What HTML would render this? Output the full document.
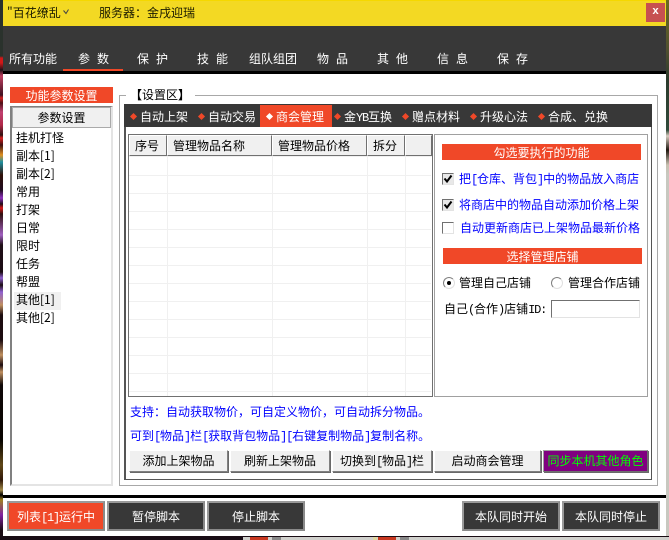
<!DOCTYPE html>
<html lang="zh"><head><meta charset="utf-8"><title>百花缭乱</title>
<style>
html,body{margin:0;padding:0;background:#fff}
#r{position:relative;width:669px;height:540px;overflow:hidden;background:#fff;font:12px/16px "WenQuanYi Zen Hei","Noto Sans CJK SC","Liberation Sans",sans-serif;color:#000}
#r div{position:absolute;box-sizing:border-box}
.t{white-space:nowrap}
.w{color:#fff}.b{color:#00f}
.m{font-family:"Liberation Mono",monospace;font-size:12px;letter-spacing:-1.200px}
.n{letter-spacing:7px}
.o{background:#f04828;color:#fff;text-align:center}
.btn{background:#f0f0f0;border:1px solid;border-color:#fff #808080 #808080 #fff;box-shadow:1px 1px 0 #696969;text-align:center;line-height:20px}
.dk{background:#383838;color:#fff;border:2px solid;border-color:#9a9a9a #8a8a8a #8a8a8a #9a9a9a;text-align:center;line-height:27px}
.tab{color:#fff;top:109px}
.dot{width:5px;height:5px;background:#f04828;transform:rotate(45deg);top:114px}
.hl{left:129px;width:302px;height:1px;background:#f0f0f0}
.vl{top:157px;height:239px;width:1px;background:#f0f0f0}
.th{top:135px;height:21px;background:#f0f0f0;border:1px solid;border-color:#fff #707070 #707070 #fff;line-height:19px;padding-left:5px;white-space:nowrap}
.cb{width:12px;height:12px;left:442px;background:#fff;border:1px solid;border-color:#707070 #e3e3e3 #e3e3e3 #707070}
.cb.on{background:#e8e8e8}
.rd{width:12px;height:12px;border-radius:50%;border:1px solid;border-color:#808080 #e0e0e0 #e0e0e0 #808080;background:#fff}
</style></head><body><div id="r">
<!-- backdrop strips -->
<div style="left:0;top:0;width:3px;height:540px;background:linear-gradient(#2a322c 0,#2a322c 56px,#d01818 58px,#d01818 63px,#201018 70px,#c04060 76px,#401020 95px,#d02020 98px,#501018 103px,#c04070 112px,#b02848 125px,#301010 135px,#d82020 138px,#401010 145px,#e09020 155px,#2090a0 162px,#301008 175px,#200c20 190px,#9030c0 198px,#200c18 204px,#d81818 208px,#301010 214px,#a060c0 235px,#201018 245px,#1c0c14 272px,#9060d0 278px,#1c0c14 285px,#9060d0 292px,#c09060 305px,#1c0c10 315px,#1c0c10 340px,#c09060 355px,#1c0c10 365px,#c09060 372px,#100808 385px,#080400 440px,#604818 465px,#301808 480px,#a08848 490px,#000 495px,#a08020 500px,#8020a0 515px,#1a0c14 530px,#1a0c14 540px)"></div>
<div style="left:666px;top:0;width:3px;height:540px;background:linear-gradient(#6a6a20 0,#505030 50px,#2c3a2c 80px,#304a3a 130px,#d8ccc0 136px,#201810 150px,#c8c0b0 165px,#c8c8c0 175px,#c8c8c0 540px)"></div>
<div style="left:0;top:536px;width:669px;height:4px;background:#180c14"></div>
<div style="left:243px;top:537px;width:426px;height:3px;background:#d0d0cc"></div>
<div style="left:250px;top:537px;width:18px;height:3px;background:#c83820"></div>
<div style="left:272px;top:537px;width:9px;height:3px;background:#888"></div>
<div style="left:373px;top:537px;width:4px;height:3px;background:#e0d8a0"></div>
<div style="left:378px;top:537px;width:18px;height:3px;background:#c83820"></div>
<div style="left:400px;top:537px;width:9px;height:3px;background:#888"></div>
<!-- main -->
<div style="left:3px;top:0;width:663px;height:26px;background:#f3d923;border-top:1px solid #f5d800"></div>
<div style="left:3px;top:26px;width:663px;height:45px;background:#383838"></div>
<div style="left:3px;top:71px;width:663px;height:3px;background:#000"></div>
<div style="left:3px;top:495px;width:663px;height:3px;background:#000"></div>
<div class="t" style="left:7px;top:5px;color:#1a1a00">"百花缭乱</div>
<svg style="position:absolute;left:63px;top:9px" width="6" height="6"><path d="M0.500 1.500L3 4.500L5.500 0.500" fill="none" stroke="#444" stroke-width="1"/></svg>
<div class="t" style="left:99px;top:5px;color:#1a1a00">服务器：金戌迎瑞</div>
<div class="w" style="left:646px;top:3px;width:19px;height:19px;background:#c75050;text-align:center;font:bold 11px/19px 'Liberation Mono',monospace">x</div>
<!-- nav -->
<div class="t w" style="left:9px;top:51px">所有功能</div>
<div class="t w n" style="left:78px;top:51px">参数</div>
<div class="t w n" style="left:137px;top:51px">保护</div>
<div class="t w n" style="left:197px;top:51px">技能</div>
<div class="t w" style="left:249px;top:51px">组队组团</div>
<div class="t w n" style="left:317px;top:51px">物品</div>
<div class="t w n" style="left:377px;top:51px">其他</div>
<div class="t w n" style="left:437px;top:51px">信息</div>
<div class="t w n" style="left:497px;top:51px">保存</div>
<div style="left:63px;top:69px;width:60px;height:2px;background:#f04828"></div>
<!-- left panel -->
<div class="o" style="left:10px;top:87px;width:103px;height:16px;line-height:17px">功能参数设置</div>
<div style="left:10px;top:106px;width:103px;height:380px;border:2px solid;border-color:#808080 #e4e4e4 #e4e4e4 #808080;border-top-width:1px;background:#fff"></div>
<div class="btn" style="left:12px;top:107px;width:99px;height:21px;border-color:#fff #888 #888 #fff;box-shadow:none;outline:1px solid #aaa;outline-offset:-1px">参数设置</div>
<div style="left:14px;top:292px;width:47px;height:18px;background:#f0f0f0"></div>
<div class="t" style="left:16px;top:130px">挂机打怪</div>
<div class="t" style="left:16px;top:148px">副本[1]</div>
<div class="t" style="left:16px;top:166px">副本[2]</div>
<div class="t" style="left:16px;top:184px">常用</div>
<div class="t" style="left:16px;top:202px">打架</div>
<div class="t" style="left:16px;top:220px">日常</div>
<div class="t" style="left:16px;top:238px">限时</div>
<div class="t" style="left:16px;top:256px">任务</div>
<div class="t" style="left:16px;top:274px">帮盟</div>
<div class="t" style="left:16px;top:292px">其他[1]</div>
<div class="t" style="left:16px;top:310px">其他[2]</div>
<!-- group -->
<div style="left:119px;top:95px;width:539px;height:391px;border:1px solid #a8a8a8"></div>
<div class="t" style="left:126px;top:87px;background:#fff;padding:0 5px 0 4px;font-weight:bold">【<span style="font-weight:normal">设置区</span>】</div>
<div style="left:124px;top:104px;width:528px;height:376px;background:#fff;border:solid #555;border-width:0 1px 1px 2px"></div>
<div style="left:124px;top:104px;width:528px;height:23px;background:#383838"></div>
<div style="left:260px;top:105px;width:72px;height:22px;background:#f04828"></div>
<div class="dot" style="left:131px"></div><div class="t tab" style="left:140px">自动上架</div>
<div class="dot" style="left:199px"></div><div class="t tab" style="left:208px">自动交易</div>
<div class="dot" style="left:267px;background:#fff"></div><div class="t tab" style="left:276px">商会管理</div>
<div class="dot" style="left:335px"></div><div class="t tab" style="left:344px">金<span class="m">YB</span>互换</div>
<div class="dot" style="left:403px"></div><div class="t tab" style="left:412px">赠点材料</div>
<div class="dot" style="left:471px"></div><div class="t tab" style="left:480px">升级心法</div>
<div class="dot" style="left:539px"></div><div class="t tab" style="left:548px">合成、兑换</div>
<!-- table -->
<div style="left:128px;top:134px;width:305px;height:263px;border:1px solid #707070;background:#fff"></div>
<div class="th" style="left:129px;width:38px">序号</div>
<div class="th" style="left:167px;width:105px">管理物品名称</div>
<div class="th" style="left:272px;width:95px">管理物品价格</div>
<div class="th" style="left:367px;width:38px">拆分</div>
<div class="th" style="left:405px;width:27px"></div>
<div style="left:129px;top:156px;width:303px;height:1px;background:#f0f0f0"></div>
<div class="hl" style="top:175px"></div><div class="hl" style="top:193px"></div><div class="hl" style="top:211px"></div><div class="hl" style="top:229px"></div><div class="hl" style="top:247px"></div><div class="hl" style="top:265px"></div><div class="hl" style="top:283px"></div><div class="hl" style="top:301px"></div><div class="hl" style="top:319px"></div><div class="hl" style="top:337px"></div><div class="hl" style="top:355px"></div><div class="hl" style="top:373px"></div><div class="hl" style="top:391px"></div>
<div class="vl" style="left:167px"></div><div class="vl" style="left:272px"></div><div class="vl" style="left:367px"></div><div class="vl" style="left:405px"></div>
<!-- right panel -->
<div style="left:434px;top:134px;width:214px;height:263px;border:1px solid #a0a0a0"></div>
<div class="o" style="left:442px;top:144px;width:199px;height:16px;line-height:17px">勾选要执行的功能</div>
<div class="cb on" style="top:173px"><svg width="10" height="10" style="display:block"><path d="M1.500 4.500L4 7.500L8.500 1.500" fill="none" stroke="#000" stroke-width="2"/></svg></div>
<div class="t b" style="left:459px;top:171px">把<span class="m">[</span>仓库、背包<span class="m">]</span>中的物品放入商店</div>
<div class="cb on" style="top:199px"><svg width="10" height="10" style="display:block"><path d="M1.500 4.500L4 7.500L8.500 1.500" fill="none" stroke="#000" stroke-width="2"/></svg></div>
<div class="t b" style="left:459px;top:197px">将商店中的物品自动添加价格上架</div>
<div class="cb" style="top:222px"></div>
<div class="t b" style="left:460px;top:220px">自动更新商店已上架物品最新价格</div>
<div class="o" style="left:443px;top:248px;width:199px;height:16px;line-height:17px">选择管理店铺</div>
<div class="rd" style="left:443px;top:277px"></div>
<div style="left:447px;top:281px;width:4px;height:4px;border-radius:50%;background:#000"></div>
<div class="t" style="left:459px;top:275px">管理自己店铺</div>
<div class="rd" style="left:551px;top:277px"></div>
<div class="t" style="left:568px;top:275px">管理合作店铺</div>
<div class="t" style="left:444px;top:301px">自己<span class="m">(</span>合作<span class="m">)</span>店铺<span class="m">ID:</span></div>
<div style="left:551px;top:300px;width:89px;height:18px;background:#fff;border:1px solid;border-color:#707070 #e3e3e3 #e3e3e3 #707070"></div>
<!-- notes -->
<div class="t b" style="left:130px;top:404px">支持：自动获取物价，可自定义物价，可自动拆分物品。</div>
<div class="t b" style="left:130px;top:428px">可到<span class="m">[</span>物品<span class="m">]</span>栏<span class="m">[</span>获取背包物品<span class="m">][</span>右键复制物品<span class="m">]</span>复制名称。</div>
<!-- action buttons -->
<div class="btn" style="left:129px;top:450px;width:99px;height:22px">添加上架物品</div>
<div class="btn" style="left:230px;top:450px;width:100px;height:22px">刷新上架物品</div>
<div class="btn" style="left:332px;top:450px;width:100px;height:22px">切换到<span class="m">[</span>物品<span class="m">]</span>栏</div>
<div class="btn" style="left:434px;top:450px;width:107px;height:22px">启动商会管理</div>
<div class="btn" style="left:543px;top:450px;width:105px;height:22px;background:#800080;color:#00ff00;border-color:#a0a0a0 #707070 #707070 #a0a0a0">同步本机其他角色</div>
<!-- bottom buttons -->
<div class="dk" style="left:7px;top:501px;width:98px;height:30px;background:#f04828">列表<span class="m">[1]</span>运行中</div>
<div class="dk" style="left:107px;top:501px;width:98px;height:30px">暂停脚本</div>
<div class="dk" style="left:207px;top:501px;width:98px;height:30px">停止脚本</div>
<div class="dk" style="left:462px;top:501px;width:98px;height:30px">本队同时开始</div>
<div class="dk" style="left:562px;top:501px;width:98px;height:30px">本队同时停止</div>
</div></body></html>
